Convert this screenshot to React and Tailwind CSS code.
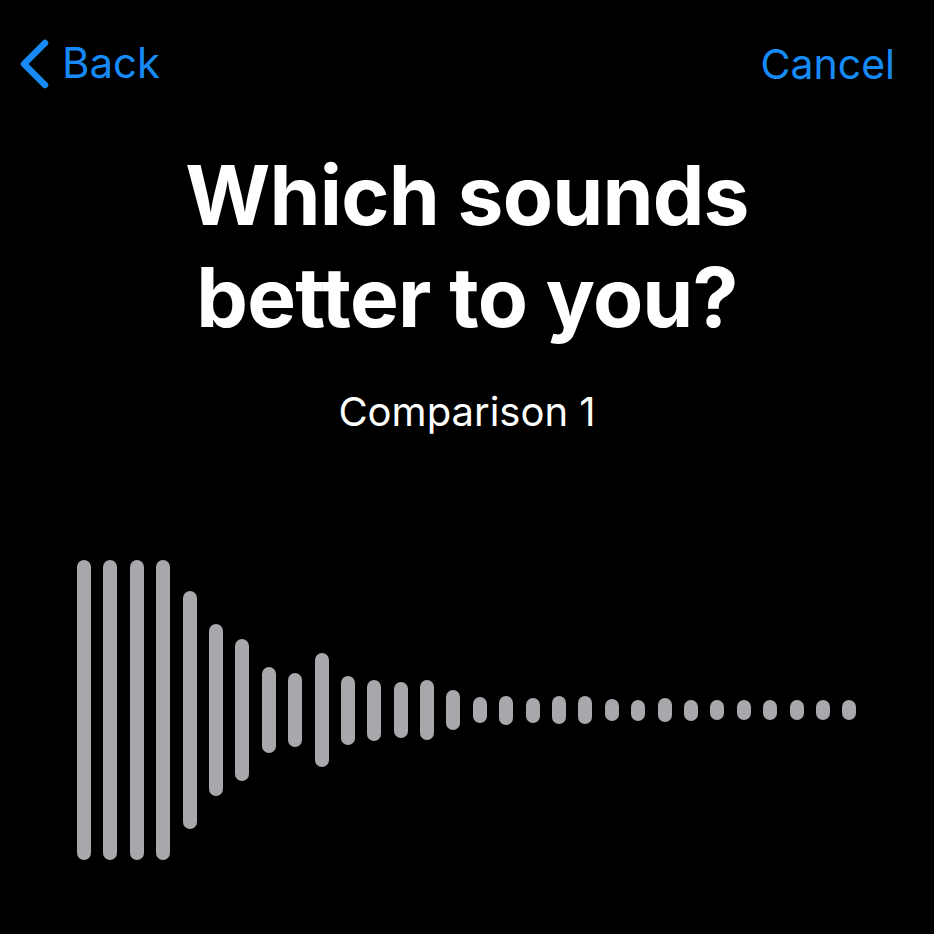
import React from 'react';

// bar heights of the sample's waveform, loudest first
const levels = [
  300, 300, 300, 300, 238, 172, 142, 86, 74, 114, 69, 61, 56, 60, 40,
  26, 29, 25, 28, 28, 22, 21, 24, 21, 20, 20, 20, 20, 20, 20,
];

const Waveform = () => (
  <div className="flex items-center gap-[12.4px] h-[300px]">
    {levels.map((h, i) => (
      <div key={i} className="w-[14px] rounded-full bg-[#a8a8ac]" style={{ height: h }} />
    ))}
  </div>
);

const App = () => {
  return (
    <div className="w-[934px] h-[934px] bg-black text-white flex flex-col overflow-hidden" style={{ fontFamily: 'Inter, "Noto Sans", sans-serif' }}>
      {/* nav bar */}
      <div className="flex items-center justify-between pl-[17px] pr-[39px] pt-[38px]">
        <button className="flex items-center gap-[11px] text-[#168bf7] text-[42px] leading-none">
          <svg width="34" height="52" viewBox="0 0 34 52" fill="none">
            <path d="M28 5 L7 26 L28 47" stroke="#168bf7" strokeWidth="6.5" strokeLinecap="round" strokeLinejoin="round" />
          </svg>
          <span className="-mt-[2px]">Back</span>
        </button>
        <button className="text-[#168bf7] text-[41px] leading-none">Cancel</button>
      </div>

      <h1 className="mt-[55px] text-center font-bold text-[82px] leading-[102px] tracking-[-0.8px]">
        Which sounds
        <br />
        better to you?
      </h1>
      <p className="mt-[43px] text-center text-[40px] leading-none">Comparison 1</p>

      <div className="mt-[128px] pl-[77px]">
        <Waveform />
      </div>
    </div>
  );
};

export default App;
